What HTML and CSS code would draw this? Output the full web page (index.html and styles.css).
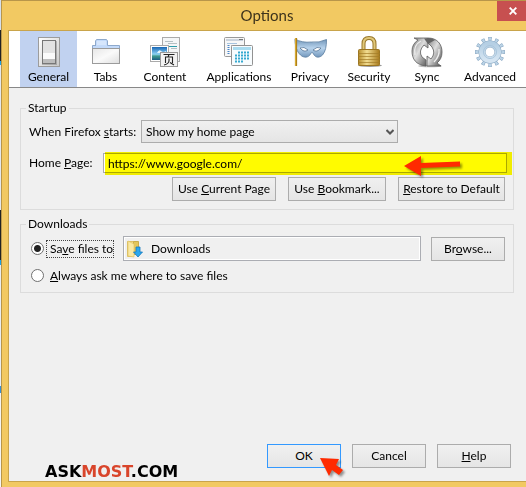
FILE: index.html
```html
<!DOCTYPE html>
<html lang="en">
<head>
    <meta charset="UTF-8">
    <meta name="viewport" content="width=device-width, initial-scale=1.0">
    <title>Options</title>
    <link rel="stylesheet" href="styles.css">
</head>
<body>
    <div class="window">
        <header class="titlebar">
            <h1>Options</h1>
            <button class="close" type="button" aria-label="Close">
                <svg width="8" height="8" viewBox="0 0 8 8"><path d="M0.7 0.7L7.3 7.3M7.3 0.7L0.7 7.3" stroke="#fff" stroke-width="1.9"/></svg>
            </button>
        </header>

        <div class="client">
            <nav class="tabs">
                <button class="tab selected" type="button">
                    <svg width="32" height="32" viewBox="0 0 32 32">
                        <defs>
                            <linearGradient id="plate" x1="0" y1="0" x2="1" y2="1"><stop offset="0" stop-color="#fff"/><stop offset="1" stop-color="#c9c9c9"/></linearGradient>
                        </defs>
                        <rect x="5.5" y="1.5" width="21" height="29" fill="url(#plate)" stroke="#9c9c9c"/>
                        <rect x="9" y="5" width="15" height="24" fill="#777" opacity=".45"/>
                        <rect x="9.5" y="4.5" width="13" height="23" fill="#e2e2e2" stroke="#777"/>
                        <rect x="10" y="17" width="12" height="6" fill="#fafafa"/>
                        <rect x="10" y="23" width="12" height="4" fill="#bdbdbd"/>
                    </svg>
                    <span>General</span>
                </button>
                <button class="tab" type="button">
                    <svg width="32" height="32" viewBox="0 0 32 32">
                        <defs>
                            <linearGradient id="folder" x1="0" y1="0" x2="1" y2="1"><stop offset="0" stop-color="#e6e6e6"/><stop offset=".5" stop-color="#fafafa"/><stop offset="1" stop-color="#dedede"/></linearGradient>
                        </defs>
                        <path d="M5.5 10V5l1-1.500h10l1 1.500v4.500h12V13h-27V9.500h3z" fill="#c3dafa" stroke="#8ea9cc"/>
                        <path d="M7 5h9v4H7z" fill="#d6e6fc"/>
                        <rect x="2.500" y="12.500" width="27" height="15" fill="url(#folder)" stroke="#9b9b9b"/>
                    </svg>
                    <span>Tabs</span>
                </button>
                <button class="tab" type="button">
                    <svg width="32" height="32" viewBox="0 0 32 32">
                        <defs>
                            <linearGradient id="sky" x1="0" y1="0" x2="0" y2="1"><stop offset="0" stop-color="#1766b5"/><stop offset=".55" stop-color="#8fd3f5"/><stop offset=".7" stop-color="#3f9a8d"/><stop offset="1" stop-color="#1c5c86"/></linearGradient>
                        </defs>
                        <rect x="13.500" y="1.500" width="17" height="24" fill="#f4f6f7" stroke="#aaa"/>
                        <path d="M16 5.500h8M19 7.500h9M22 12.500h6" stroke="#b5c0c4"/>
                        <path d="M16 10.500h12" stroke="#2d9caa"/>
                        <rect x="1.500" y="9.500" width="18" height="16" fill="#fff" stroke="#aaa"/>
                        <rect x="3" y="11" width="15" height="13" fill="url(#sky)"/>
                        <path d="M8 17q2-4 4-2t5 0v2z" fill="#e5f6ff"/>
                        <rect x="11.500" y="16.500" width="17" height="14" fill="#f3f3f3" stroke="#999"/>
                        <path d="M14.500 18.500h11M20 18.500l-1 2.500M16.500 27v-6h7v6M20 22.500v2.500q-.5 3-5 4M21 26.500l4 2.500" fill="none" stroke="#222" stroke-width="1.100"/>
                    </svg>
                    <span>Content</span>
                </button>
                <button class="tab" type="button">
                    <svg width="32" height="32" viewBox="0 0 32 32">
                        <rect x="1.500" y="1.500" width="20" height="19" rx="1" fill="#f7f7f7" stroke="#999"/>
                        <path d="M3 4h17" stroke="#cbd3dd" stroke-width="2"/>
                        <path d="M16 3.500h4" stroke="#777"/>
                        <path d="M4 7.500h10" stroke="#a7c4df"/>
                        <path d="M5.500 9v9" stroke="#4a86c8" stroke-width="2" stroke-dasharray="1 1"/>
                        <path d="M8 9.500h6M8 12.500h6M8 15.500h4" stroke="#bbb"/>
                        <rect x="8.500" y="9.500" width="21" height="20" rx="1" fill="#f8fcfe" stroke="#929292"/>
                        <rect x="10" y="11" width="18" height="3" fill="#aadcf0"/>
                        <path d="M15 16.500h12M12 19.500h15M12 22.500h15M12 25.500h9" stroke="#36a9d0" stroke-width="2" stroke-dasharray="2 1"/>
                    </svg>
                    <span>Applications</span>
                </button>
                <button class="tab" type="button">
                    <svg width="32" height="32" viewBox="0 0 32 32">
                        <defs>
                            <linearGradient id="mask" x1="0" y1="0" x2="0" y2="1"><stop offset="0" stop-color="#6f94b8"/><stop offset=".5" stop-color="#b8d3ec"/><stop offset="1" stop-color="#7498bd"/></linearGradient>
                        </defs>
                        <path d="M1 3q7 4 16.500 3Q25 7 32.500 3.500c0 7-1 12-4 15.500-3 3-7 3-9-1-1-2-2-2-3 0-2 4-7 4-10 1C3 16 1 10 1 3z" fill="url(#mask)" stroke="#587b9e" stroke-width=".8"/>
                        <path d="M6 12q4-2 8 2-4 3-8-2zM27 12q-4-2-8 2 4 3 8-2z" fill="#fff" stroke="#48698d" stroke-width=".7"/>
                        <path d="M2 2v28" stroke="#a37412" stroke-width="2.200"/>
                        <path d="M1.700 2v28" stroke="#e3b83d"/>
                    </svg>
                    <span>Privacy</span>
                </button>
                <button class="tab" type="button">
                    <svg width="32" height="32" viewBox="0 0 32 32">
                        <defs>
                            <linearGradient id="brass"><stop offset="0" stop-color="#b78e2c"/><stop offset=".4" stop-color="#f2dd91"/><stop offset="1" stop-color="#a87a1c"/></linearGradient>
                        </defs>
                        <path d="M10.500 15V8q0-6 5.500-6t5.500 6v7" fill="none" stroke="#98772c" stroke-width="4"/>
                        <path d="M10.500 15V8q0-6 5.500-6t5.500 6v7" fill="none" stroke="#e0c778" stroke-width="2"/>
                        <ellipse cx="17" cy="29.500" rx="12" ry="1.500" fill="#999"/>
                        <rect x="5.500" y="13.500" width="21" height="16" rx="1" fill="url(#brass)" stroke="#9b7522"/>
                        <path d="M5 17.500h22M5 20.500h22M5 23.500h22M5 26.500h22" stroke="#a37d29" opacity=".7"/>
                    </svg>
                    <span>Security</span>
                </button>
                <button class="tab" type="button">
                    <svg width="32" height="32" viewBox="0 0 32 32">
                        <defs>
                            <linearGradient id="steel" x1="0" y1="0" x2="1" y2="1"><stop offset="0" stop-color="#777"/><stop offset=".45" stop-color="#dedede"/><stop offset="1" stop-color="#4d4d4d"/></linearGradient>
                        </defs>
                        <ellipse cx="19" cy="30" rx="12" ry="1.300" fill="#bbb"/>
                        <path d="M15 30C5 29 1 23 1 15q0-7 6-11L3 2h14v10l-4-3q-6 6-2 12l4 3z" fill="url(#steel)" stroke="#5e5e5e" stroke-width=".8"/>
                        <path d="M17 2c9 0 14 6 14 14q0 7-5 11l4 3H16V20l4 3q5-6 1-12l-4-4z" fill="url(#steel)" stroke="#5a5a5a" stroke-width=".8"/>
                        <path d="M4 19Q2 9 10 5M28 13q1 7-5 13" fill="none" stroke="#ededed" stroke-width="1.300"/>
                        <path d="M13 2.500q6-1.500 11 1.500L17 8z" fill="#666"/>
                    </svg>
                    <span>Sync</span>
                </button>
                <button class="tab" type="button">
                    <svg width="32" height="32" viewBox="0 0 32 32">
                        <defs>
                            <linearGradient id="gear" x1="0" y1="0" x2="0" y2="1"><stop offset="0" stop-color="#b5cfe4"/><stop offset="1" stop-color="#d5e5f2"/></linearGradient>
                        </defs>
                        <g fill="none">
                            <circle cx="16" cy="16" r="12.500" stroke="#8dabc5" stroke-width="5" pathLength="120" stroke-dasharray="5 5" stroke-dashoffset="2.500"/>
                            <circle cx="16" cy="16" r="12.200" stroke="#bdd5e8" stroke-width="4.500" pathLength="120" stroke-dasharray="3 7" stroke-dashoffset="1.500"/>
                            <circle cx="16" cy="16" r="8" stroke="#8dabc5" stroke-width="7"/>
                            <circle cx="16" cy="16" r="8" stroke="url(#gear)" stroke-width="6"/>
                            <circle cx="16" cy="16" r="6.500" stroke="#a9c5dc"/>
                        </g>
                    </svg>
                    <span>Advanced</span>
                </button>
            </nav>

            <main class="panel">
                <fieldset>
                    <legend>Startup</legend>
                    <div class="row startup-row">
                        <label for="startup">When Firefox <u>s</u>tarts:</label>
                        <div class="select-box">
                            <select id="startup">
                                <option>Show my home page</option>
                            </select>
                            <svg class="chevron" width="8" height="6" viewBox="0 0 8 6"><path d="M0.500 1L4 4.500 7.500 1" fill="none" stroke="#555" stroke-width="2"/></svg>
                        </div>
                    </div>
                    <div class="row home-row">
                        <label for="homepage">Home <u>P</u>age:</label>
                        <div class="highlight">
                            <input type="text" id="homepage" value="https://www.google.com/">
                            <svg class="arrow-left" width="62" height="26" viewBox="0 0 62 26"><path d="M1 11L18 1v7l39-1.500v5L18 13v8z" fill="#ff2a00"/></svg>
                        </div>
                    </div>
                    <div class="row home-buttons">
                        <button class="btn current" type="button">Use <u>C</u>urrent Page</button>
                        <button class="btn bookmark" type="button">Use <u>B</u>ookmark...</button>
                        <button class="btn restore" type="button"><u>R</u>estore to Default</button>
                    </div>
                </fieldset>

                <fieldset class="downloads">
                    <legend>Downloads</legend>
                    <div class="row save-row">
                        <input type="radio" name="save" id="save-to" checked>
                        <label class="focused" for="save-to">Sa<u>v</u>e files to</label>
                        <div class="folder">
                            <svg width="16" height="18" viewBox="0 0 16 18">
                                <path d="M.5 1.500h6v15h-6z" fill="#f5df8a" stroke="#dfc266"/>
                                <path d="M6.500 1.500h5v13h-5z" fill="#e3c65b" stroke="#cbad4a"/>
                                <path d="M1 1l6 3v13l-6-1z" fill="#fae9a3" stroke="#dcbf62" stroke-width=".6"/>
                                <path d="M9 7h4v5h2.500L11 17l-4.500-5H9z" fill="#29a7ee" stroke="#1479bd" stroke-width=".8"/>
                            </svg>
                            <span>Downloads</span>
                        </div>
                        <button class="btn browse" type="button">Br<u>o</u>wse...</button>
                    </div>
                    <div class="row ask-row">
                        <input type="radio" name="save" id="ask">
                        <label for="ask"><u>A</u>lways ask me where to save files</label>
                    </div>
                </fieldset>
            </main>

            <footer class="footer">
                <div class="brand">ASK<span>MOST</span>.COM</div>
                <div class="actions">
                    <button class="btn ok" type="button">OK
                        <svg class="arrow-ok" width="30" height="24" viewBox="0 0 30 24"><path d="M1 1L20 2l-3 6 7 5-4 5-7-5-3 6z" fill="#ff2a00"/></svg>
                    </button>
                    <button class="btn" type="button">Cancel</button>
                    <button class="btn" type="button"><u>H</u>elp</button>
                </div>
            </footer>
        </div>
    </div>
</body>
</html>
```

FILE: styles.css
```css
* {
    box-sizing: border-box;
}
body {
    margin: 0;
    padding-left: 1px;
    min-height: 100vh;
    display: flex;
    font-family: Lato, "Open Sans", sans-serif;
    font-size: 12px;
    line-height: 16px;
    color: #000;
    /* sliver of the desktop behind the window */
    background: linear-gradient(#d5dfec 0 30px, #222 30px 61px, #1ba1e2 61px 65px, #e4e8ee 65px 210px, #222 210px 260px, #1ba1e2 260px 265px, #e9edf2 265px 386px, #3a8fd0 386px 393px, #f4f4f4 393px);
}
button, input, select {
    font: inherit;
    color: inherit;
}
.window {
    flex: 1;
    display: flex;
    flex-direction: column;
    min-width: 0;
    background: #f2c962;
    border-top: 1px solid #b8964a;
    border-left: 1px solid #b8964a;
    padding: 0 0 5px 6px;
    overflow: hidden;
}
.titlebar {
    position: relative;
    height: 29px;
}
.titlebar h1 {
    margin: 0;
    font-size: 15px;
    font-weight: normal;
    line-height: 29px;
    text-align: center;
    color: #3d331c;
}
.close {
    position: absolute;
    top: 0;
    right: 0;
    width: 29px;
    height: 20px;
    padding: 0 0 0 2px;
    border: 0;
    background: #c75050;
    display: flex;
    align-items: center;
    justify-content: center;
}
.client {
    flex: 1;
    display: flex;
    flex-direction: column;
    background: #f0f0f0;
    border: 1px solid #c9a44b;
    border-right: 0;
}
.tabs {
    display: grid;
    grid-template-columns: 57fr 57fr 62fr 86fr 56fr 62fr 54fr 72fr;
    padding-left: 11px;
    background: #fff;
    border-bottom: 1px solid #888;
}
.tab {
    display: flex;
    flex-direction: column;
    align-items: center;
    gap: 1px;
    height: 56px;
    padding: 5px 0 0;
    border: 0;
    background: none;
    font-size: 12px;
    white-space: nowrap;
}
.tab svg {
    overflow: visible;
}
.selected {
    background: #c1d2f0;
}
.panel {
    padding: 12px 12px 0 11px;
}
fieldset {
    margin: 0;
    padding: 4px 6px 8px 8px;
    border: 1px solid #dcdcdc;
    min-width: 0;
}
.downloads {
    margin-top: 6px;
    padding-bottom: 7px;
}
legend {
    margin-left: -3px;
    padding: 0 2px;
}
.row {
    display: flex;
    align-items: center;
}
.startup-row label {
    width: 112px;
}
.select-box {
    position: relative;
    width: 257px;
}
select {
    display: block;
    width: 100%;
    height: 23px;
    padding: 0 4px;
    border: 1px solid #acacac;
    border-radius: 0;
    background: linear-gradient(#f0f0f0, #e5e5e5);
    appearance: none;
}
.chevron {
    position: absolute;
    right: 4px;
    top: 9px;
}
.home-row {
    margin-top: 10px;
}
.home-row label {
    width: 74px;
}
.highlight {
    flex: 1;
    position: relative;
}
.highlight::after {
    content: "";
    position: absolute;
    inset: -1px -5px -2px 2px;
    background: #fffb00;
    mix-blend-mode: multiply;
    pointer-events: none;
}
.highlight input {
    display: block;
    width: 100%;
    height: 20px;
    padding: 0 4px;
    border: 1px solid #ababab;
    background: #fff;
}
.arrow-left {
    position: absolute;
    right: 42px;
    top: 2px;
    z-index: 1;
    filter: drop-shadow(2px 2px 1px rgba(0, 0, 0, 0.4));
}
.home-buttons {
    justify-content: flex-end;
    gap: 12px;
    margin-top: 4px;
    padding-right: 2px;
}
.btn {
    width: 74px;
    height: 24px;
    padding: 0;
    border: 1px solid #acacac;
    background: linear-gradient(#f0f0f0, #e5e5e5);
    white-space: nowrap;
}
.current {
    width: 104px;
}
.bookmark {
    width: 98px;
}
.restore {
    width: 107px;
}
input[type="radio"] {
    appearance: none;
    width: 13px;
    height: 13px;
    margin: 0 2px;
    border: 1px solid #707070;
    border-radius: 50%;
    background: #fff;
}
input[type="radio"]:checked {
    background: radial-gradient(circle, #222 0 3px, #fff 4px);
}
.save-row {
    padding-right: 2px;
}
.save-row label {
    width: 66px;
    margin-left: 1px;
    padding: 0 3px;
    white-space: nowrap;
}
.focused {
    outline: 1px dotted #444;
}
.ask-row label {
    padding-left: 4px;
}
.folder {
    flex: 1;
    display: flex;
    align-items: center;
    gap: 8px;
    height: 25px;
    margin: 0 10px;
    padding: 0 3px;
    border: 1px solid #abadb3;
    box-shadow: inset 0 0 0 1px #fff;
}
.ask-row {
    height: 19px;
    margin-top: 5px;
}
.footer {
    display: flex;
    align-items: flex-end;
    justify-content: space-between;
    margin-top: auto;
    padding: 0 15px 0 36px;
}
.brand {
    font-family: "DejaVu Sans", sans-serif;
    font-size: 16px;
    font-weight: bold;
    line-height: 18px;
}
.brand span {
    color: #d9452b;
}
.actions {
    display: flex;
    gap: 11px;
    margin-bottom: 13px;
}
.ok {
    position: relative;
    border-color: #3399ff;
}
.arrow-ok {
    position: absolute;
    left: 51px;
    top: 12px;
    overflow: visible;
    filter: drop-shadow(2px 2px 1px rgba(0, 0, 0, 0.4));
}
```
